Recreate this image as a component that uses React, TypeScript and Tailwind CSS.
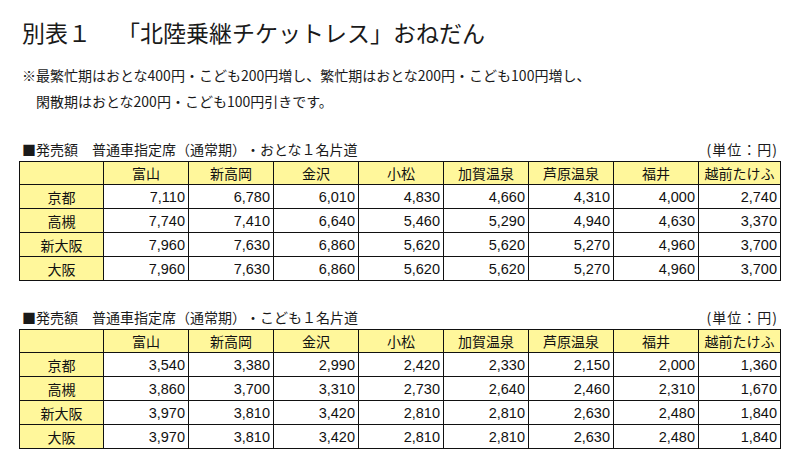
import React from 'react';

type Row = { from: string; fares: string[] };

const stations = ['富山', '新高岡', '金沢', '小松', '加賀温泉', '芦原温泉', '福井', '越前たけふ'];

const adultFares: Row[] = [
  { from: '京都', fares: ['7,110', '6,780', '6,010', '4,830', '4,660', '4,310', '4,000', '2,740'] },
  { from: '高槻', fares: ['7,740', '7,410', '6,640', '5,460', '5,290', '4,940', '4,630', '3,370'] },
  { from: '新大阪', fares: ['7,960', '7,630', '6,860', '5,620', '5,620', '5,270', '4,960', '3,700'] },
  { from: '大阪', fares: ['7,960', '7,630', '6,860', '5,620', '5,620', '5,270', '4,960', '3,700'] },
];

const childFares: Row[] = [
  { from: '京都', fares: ['3,540', '3,380', '2,990', '2,420', '2,330', '2,150', '2,000', '1,360'] },
  { from: '高槻', fares: ['3,860', '3,700', '3,310', '2,730', '2,640', '2,460', '2,310', '1,670'] },
  { from: '新大阪', fares: ['3,970', '3,810', '3,420', '2,810', '2,810', '2,630', '2,480', '1,840'] },
  { from: '大阪', fares: ['3,970', '3,810', '3,420', '2,810', '2,810', '2,630', '2,480', '1,840'] },
];

const jp = { fontFamily: '"Noto Sans CJK JP", sans-serif' };
const num = { fontFamily: '"Liberation Sans", Arial, sans-serif' };

const FareTable: React.FC<{ title: string; rows: Row[] }> = ({ title, rows }) => (
  <div className="w-[761px]">
    <div className="flex justify-between items-center h-[20px] pl-[3px] pr-[2px] text-[14px] leading-[20px]">
      <span>{title}</span>
      <span className="tracking-[1px]">(単位：円)</span>
    </div>
    <table className="mt-[2px] w-[761px] table-fixed border-collapse text-[14px] text-[#111]">
      <colgroup>
        <col className="w-[84px]" />
        <col className="w-[85px]" />
        <col className="w-[85px]" />
        <col className="w-[85px]" />
        <col className="w-[85px]" />
        <col className="w-[85px]" />
        <col className="w-[85px]" />
        <col className="w-[85px]" />
        <col className="w-[82px]" />
      </colgroup>
      <thead>
        <tr className="h-[23px] bg-[#fff79b]">
          <th className="border-[1.5px] border-[#111] p-0" />
          {stations.map((s) => (
            <th key={s} className="border-[1.5px] border-[#111] p-0 font-normal text-center leading-[20px]">
              {s}
            </th>
          ))}
        </tr>
      </thead>
      <tbody>
        {rows.map((r) => (
          <tr key={r.from} className="h-[24px]">
            <td className="border-[1.5px] border-[#111] bg-[#fff79b] p-0 text-center leading-[20px]">
              {r.from}
            </td>
            {r.fares.map((f, i) => (
              <td
                key={i}
                style={num}
                className="border-[1.5px] border-[#111] bg-white p-0 pr-[3px] text-right text-[14.5px] leading-[20px]"
              >
                {f}
              </td>
            ))}
          </tr>
        ))}
      </tbody>
    </table>
  </div>
);

const App: React.FC = () => {
  return (
    <div
      style={jp}
      className="w-[800px] h-[463px] bg-white text-[#1a1a1a] pl-[19px] pt-[18px] overflow-hidden [text-spacing-trim:space-all]"
    >
      <h1 className="pl-[3px] text-[23px] leading-[28px] font-normal">
        <span>別表１</span>
        <span className="ml-[26px]">「北陸乗継チケットレス」おねだん</span>
      </h1>

      <div className="mt-[16px] pl-[3px] text-[14px] leading-[26px]">
        <p>※最繁忙期はおとな400円・こども200円増し、繁忙期はおとな200円・こども100円増し、</p>
        <p className="pl-[14px]">閑散期はおとな200円・こども100円引きです。</p>
      </div>

      <div className="mt-[25px]">
        <FareTable title="■発売額　普通車指定席（通常期）・おとな１名片道" rows={adultFares} />
      </div>

      <div className="mt-[26px]">
        <FareTable title="■発売額　普通車指定席（通常期）・こども１名片道" rows={childFares} />
      </div>
    </div>
  );
};

export default App;
